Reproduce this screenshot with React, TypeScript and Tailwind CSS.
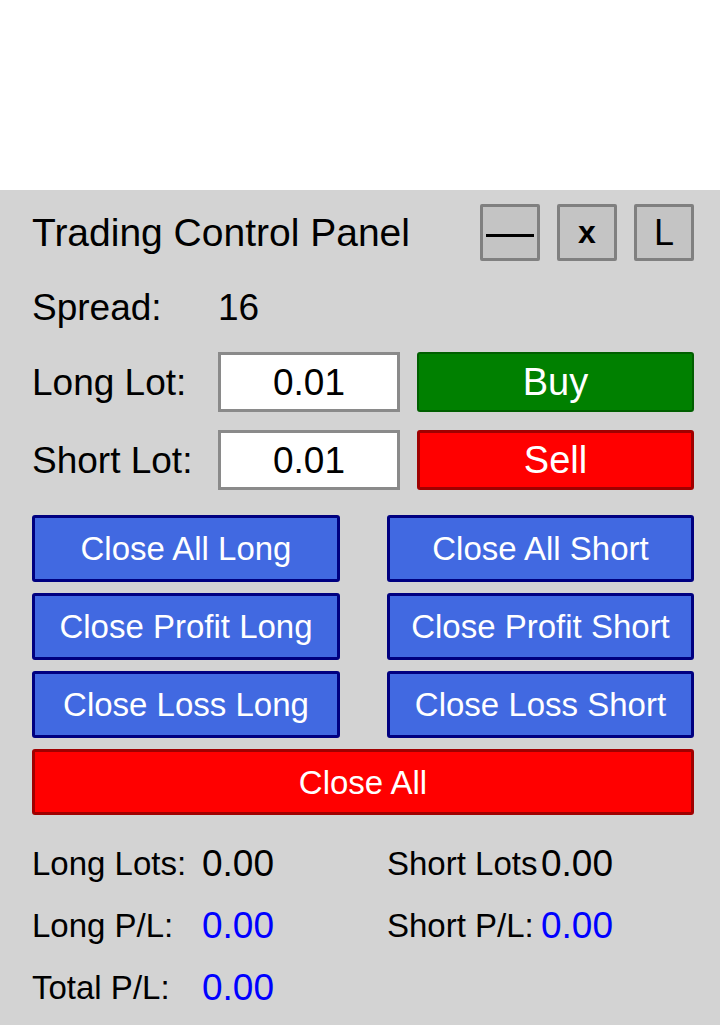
import React from 'react';

const font = { fontFamily: '"Liberation Sans", Arial, sans-serif' };

interface StatProps {
    label: string;
    value: string;
    blue?: boolean;
}

const CloseButton: React.FC<{ text: string; className?: string }> = ({ text, className = '' }) => (
    <button
        className={`flex items-center justify-center border-[3px] border-[#000080] bg-[#4169e1] rounded-[3px] text-white text-[33px] leading-none ${className}`}
    >
        {text}
    </button>
);

const StatLabel: React.FC<{ text: string }> = ({ text }) => (
    <div className="text-[33px] leading-[40px] text-black whitespace-nowrap">{text}</div>
);

const StatValue: React.FC<StatProps> = ({ value, blue }) => (
    <div className={`text-[37px] leading-[40px] whitespace-nowrap ${blue ? 'text-[#0000ff]' : 'text-black'}`}>{value}</div>
);

export default function App() {
    return (
        <div className="w-[720px] h-[1025px] bg-white flex flex-col overflow-hidden" style={font}>
            <div className="h-[190px] shrink-0" />

            <div className="flex-1 bg-[#d3d3d3] pl-[32px] pr-[26px]">
                {/* Title row */}
                <div className="flex items-center justify-between pt-[14px]">
                    <div className="text-[39px] leading-none text-black whitespace-nowrap">Trading Control Panel</div>
                    <div className="flex gap-[17px]">
                        <div className="w-[60px] h-[57px] bg-[#c4c4c4] border-[3px] border-[#808080] rounded-[2px] flex items-center justify-center">
                            <div className="w-[48px] h-[3px] bg-black mt-[6px]" />
                        </div>
                        <div className="w-[60px] h-[57px] bg-[#c4c4c4] border-[3px] border-[#808080] rounded-[2px] flex items-center justify-center text-[32px] font-bold leading-none text-black pb-[2px]">
                            x
                        </div>
                        <div className="w-[60px] h-[57px] bg-[#c4c4c4] border-[3px] border-[#808080] rounded-[2px] flex items-center justify-center text-[36px] leading-none text-black">
                            L
                        </div>
                    </div>
                </div>

                {/* Spread */}
                <div className="flex items-center mt-[26px] h-[40px]">
                    <div className="w-[186px] text-[37px] leading-none text-black">Spread:</div>
                    <div className="text-[37px] leading-none text-black">16</div>
                </div>

                {/* Lot rows */}
                <div className="flex items-center mt-[25px] h-[60px]">
                    <div className="w-[186px] text-[37px] leading-none text-black">Long Lot:</div>
                    <div className="w-[182px] h-full bg-white border-[3px] border-[#8a8a8a] flex items-center justify-center text-[37px] leading-none text-black">
                        0.01
                    </div>
                    <button className="ml-[17px] flex-1 h-full bg-[#008000] border-[2px] border-[#005f00] rounded-[3px] flex items-center justify-center text-[38px] leading-none text-white">
                        Buy
                    </button>
                </div>
                <div className="flex items-center mt-[18px] h-[60px]">
                    <div className="w-[186px] text-[37px] leading-none text-black">Short Lot:</div>
                    <div className="w-[182px] h-full bg-white border-[3px] border-[#8a8a8a] flex items-center justify-center text-[37px] leading-none text-black">
                        0.01
                    </div>
                    <button className="ml-[17px] flex-1 h-full bg-[#ff0000] border-[3px] border-[#a00000] rounded-[3px] flex items-center justify-center text-[38px] leading-none text-white">
                        Sell
                    </button>
                </div>

                {/* Close buttons */}
                <div className="grid grid-cols-[308px_307px] justify-between mt-[25px] gap-y-[11px]">
                    <CloseButton text="Close All Long" className="h-[67px]" />
                    <CloseButton text="Close All Short" className="h-[67px]" />
                    <CloseButton text="Close Profit Long" className="h-[67px]" />
                    <CloseButton text="Close Profit Short" className="h-[67px]" />
                    <CloseButton text="Close Loss Long" className="h-[67px]" />
                    <CloseButton text="Close Loss Short" className="h-[67px]" />
                </div>
                <button className="mt-[11px] w-full h-[66px] bg-[#ff0000] border-[3px] border-[#a00000] rounded-[3px] flex items-center justify-center text-[33px] leading-none text-white">
                    Close All
                </button>

                {/* Stats */}
                <div className="grid grid-cols-[170px_185px_154px_1fr] mt-[29px] gap-y-[22px] items-center">
                    <StatLabel text="Long Lots:" />
                    <StatValue label="" value="0.00" />
                    <StatLabel text="Short Lots" />
                    <StatValue label="" value="0.00" />

                    <StatLabel text="Long P/L:" />
                    <StatValue label="" value="0.00" blue />
                    <StatLabel text="Short P/L:" />
                    <StatValue label="" value="0.00" blue />

                    <StatLabel text="Total P/L:" />
                    <StatValue label="" value="0.00" blue />
                </div>
            </div>
        </div>
    );
}
